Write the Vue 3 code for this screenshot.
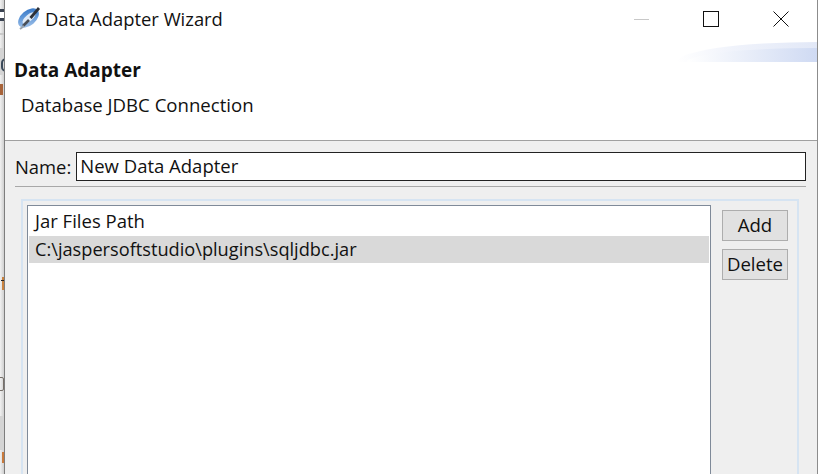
<template>
  <div class="screen">
    <div class="behind">
      <span class="frag frag-e"></span>
      <span class="frag frag-rule"></span>
      <span class="frag frag-band"></span>
      <span class="frag frag-c"></span>
      <span class="frag frag-orange"></span>
      <span class="frag frag-t"></span>
      <span class="frag frag-t-bar"></span>
      <span class="frag frag-box"></span>
      <span class="frag frag-band2"></span>
      <span class="frag frag-orange2"></span>
    </div>
    <div class="wizard">
      <div class="titlebar">
        <svg class="app-icon" width="26" height="26" viewBox="0 0 26 26">
          <defs>
            <linearGradient id="ring" x1="0" y1="1" x2="1" y2="0">
              <stop offset="0" stop-color="#b4cdec" />
              <stop offset="0.55" stop-color="#5f97d8" />
              <stop offset="1" stop-color="#2a6dc0" />
            </linearGradient>
          </defs>
          <ellipse cx="12.5" cy="12" rx="12" ry="7.5" transform="rotate(-40 12.5 12)" fill="url(#ring)" />
          <ellipse cx="13" cy="12" rx="8" ry="3.4" transform="rotate(-40 13 12)" fill="#dfeaf7" />
          <path d="M7 20 L13 14" stroke="#4a4f57" stroke-width="2.6" />
          <path d="M14.5 12 L23 2" stroke="#2d3138" stroke-width="2.8" />
          <path d="M4 23 L8 20" stroke="#9aa3ad" stroke-width="2" />
        </svg>
        <span class="title">Data Adapter Wizard</span>
        <div class="win-controls">
          <span class="ctl minimize"></span>
          <span class="ctl maximize"></span>
          <svg class="ctl close" width="16" height="16" viewBox="0 0 16 16">
            <path d="M0.5 0.5 L15.5 15.5 M15.5 0.5 L0.5 15.5" stroke="#111" stroke-width="1" fill="none" />
          </svg>
        </div>
      </div>

      <div class="banner">
        <div class="swoosh"></div>
        <div class="swoosh swoosh-inner"></div>
        <h1 class="banner-title">Data Adapter</h1>
        <p class="banner-desc">Database JDBC Connection</p>
      </div>

      <div class="body">
        <div class="name-row">
          <label class="name-label">Name:</label>
          <input class="name-input" type="text" value="New Data Adapter" />
        </div>
        <div class="separator"></div>
        <div class="group">
          <div class="jar-list">
            <div v-for="row in rows" :key="row.text" class="jar-row" :class="{ selected: row.selected }">
              {{ row.text }}
            </div>
          </div>
          <div class="side-buttons">
            <button class="btn">Add</button>
            <button class="btn">Delete</button>
          </div>
        </div>
      </div>
    </div>
  </div>
</template>

<script setup>
const rows = [
  { text: 'Jar Files Path', selected: false },
  { text: 'C:\\jaspersoftstudio\\plugins\\sqljdbc.jar', selected: true },
]
</script>

<style>
html,
body {
  margin: 0;
  overflow: hidden;
}
</style>

<style scoped>
.screen {
  display: flex;
  width: 818px;
  height: 474px;
  overflow: hidden;
  background: #c4c4c4;
  font-family: "Open Sans", "Noto Sans", sans-serif;
  color: #111;
}

/* window behind the dialog, only a sliver shows */
.behind {
  position: relative;
  width: 4px;
  overflow: hidden;
  background: linear-gradient(90deg, #f1f1f1, #cfcfcf);
}

.frag {
  position: absolute;
  display: block;
}

.frag-e {
  right: 0;
  top: 9px;
  width: 4px;
  height: 12px;
  border-top: 3px solid #3a4250;
  border-bottom: 3px solid #3a4250;
  box-sizing: border-box;
  box-shadow: inset 0 3px 0 #fff, inset 0 -3px 0 #fff;
}

.frag-rule {
  left: 0;
  right: 0;
  top: 33px;
  height: 2px;
  background: #c9c9c9;
}

.frag-band {
  left: 0;
  right: 0;
  top: 48px;
  height: 27px;
  background: #d4d4d4;
}

.frag-c {
  left: 1px;
  top: 58px;
  width: 8px;
  height: 10px;
  border: 2px solid #3a4a5a;
  border-radius: 5px;
}

.frag-orange {
  left: 0;
  width: 3px;
  top: 84px;
  height: 11px;
  background: #a8643a;
}

.frag-t {
  left: 2px;
  top: 277px;
  width: 2px;
  height: 13px;
  background: #c9823f;
}

.frag-t-bar {
  left: 1px;
  right: 0;
  top: 280px;
  height: 1px;
  background: #222;
}

.frag-box {
  left: -6px;
  top: 377px;
  width: 8px;
  height: 12px;
  border: 1px solid #77706a;
  border-radius: 2px;
}

.frag-band2 {
  left: 0;
  right: 0;
  top: 416px;
  height: 34px;
  background: #d4d4d4;
}

.frag-orange2 {
  right: 0;
  width: 2px;
  top: 452px;
  height: 11px;
  background: #c97a3c;
}

.wizard {
  width: 813px;
  display: flex;
  flex-direction: column;
  border-left: 1px solid #7d7d7d;
  border-right: 1px solid #8c8c8c;
  background: #efefef;
}

.titlebar {
  height: 38px;
  display: flex;
  align-items: center;
  background: #fff;
  padding-left: 11px;
}

.app-icon {
  margin-right: 3px;
}

.title {
  font-size: 18.4px;
  padding-bottom: 2px;
}

.win-controls {
  margin-left: auto;
  display: flex;
  align-items: center;
  gap: 54px;
  padding-right: 28px;
}

.ctl {
  display: block;
}

.minimize {
  width: 15px;
  height: 1px;
  background: #c8c8c8;
}

.maximize {
  width: 14px;
  height: 14px;
  border: 1px solid #111;
}

.banner {
  position: relative;
  height: 103px;
  box-sizing: border-box;
  background: #fff;
  border-bottom: 1px solid #a0a0a0;
  padding-left: 9px;
}

.swoosh {
  position: absolute;
  right: 0;
  top: 4px;
  width: 140px;
  height: 20px;
  background: linear-gradient(90deg, #fff, #f0f3fb 40%, #e2e8f7);
  border-top-left-radius: 100% 100%;
}

.swoosh-inner {
  top: 10px;
  height: 14px;
  width: 130px;
  background: linear-gradient(90deg, #fff, #e9eef9 45%, #cfdaf3);
}

.banner-title {
  margin: 20px 0 0;
  font-size: 19px;
  font-weight: 700;
  line-height: 24px;
}

.banner-desc {
  margin: 11px 0 0 7px;
  font-size: 18.6px;
  line-height: 24px;
}

.body {
  flex: 1;
  display: flex;
  flex-direction: column;
  padding: 11px 10px 0 10px;
}

.name-row {
  display: flex;
  align-items: center;
  gap: 5px;
  height: 29px;
  margin-right: 1px;
}

.name-label {
  font-size: 18.4px;
  padding-bottom: 1px;
}

.name-input {
  flex: 1;
  min-width: 0;
  height: 29px;
  box-sizing: border-box;
  border: 1px solid #222;
  padding: 0 3px 2px;
  font: inherit;
  font-size: 18.5px;
  color: #111;
  background: #fff;
  outline: none;
}

.separator {
  height: 1px;
  background: #a8a8a8;
  margin: 5px 1px 0 0;
}

.group {
  flex: 1;
  display: flex;
  margin: 12px 8px 0 6px;
  border: 2px solid #d6e4f2;
  border-bottom: none;
  padding: 4px 0 0 4px;
}

.jar-list {
  width: 684px;
  box-sizing: border-box;
  background: #fff;
  border: 1px solid #7f8a99;
  border-bottom: none;
  padding: 3px 1px 0 1px;
}

.jar-row {
  height: 27px;
  line-height: 26px;
  padding-left: 6px;
  font-size: 18.2px;
}

.jar-row:first-child {
  font-size: 18.5px;
  line-height: 24px;
}

.jar-row.selected {
  background: #d9d9d9;
}

.side-buttons {
  display: flex;
  flex-direction: column;
  gap: 8px;
  margin: 5px 0 0 11px;
}

.btn {
  width: 66px;
  height: 31px;
  padding: 0 0 2px;
  border: 1px solid #adadad;
  background: #e1e1e1;
  font: inherit;
  font-size: 18.6px;
  color: #111;
}
</style>
